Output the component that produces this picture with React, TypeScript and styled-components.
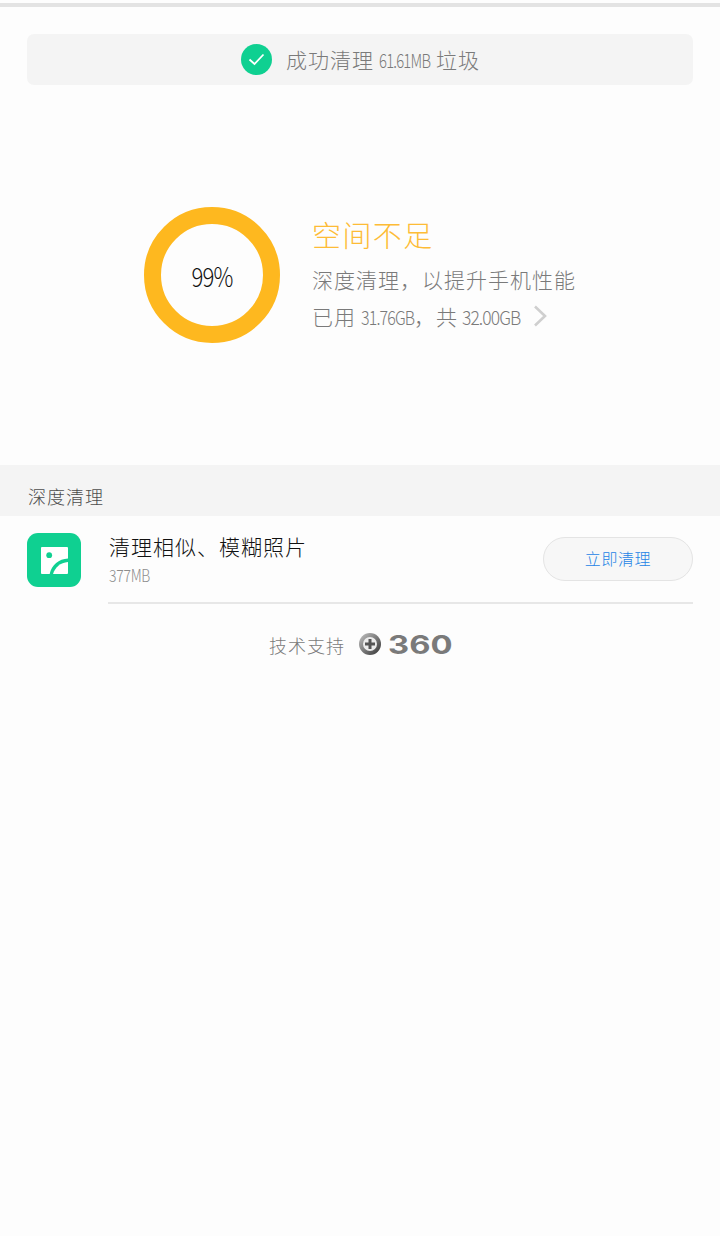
import React from "react";
import styled, { createGlobalStyle } from "styled-components";

const Global = createGlobalStyle`
  html, body { margin: 0; padding: 0; background: #fdfdfd; }
  body { font-family: "Noto Sans CJK SC", "Noto Sans", sans-serif; }
`;

const Page = styled.div`
  width: 720px;
  height: 1236px;
  background: #fdfdfd;
  display: flex;
  flex-direction: column;
  overflow: hidden;
`;

const TopLine = styled.div`
  margin-top: 3px;
  height: 4px;
  flex: none;
  background: #e3e3e3;
`;

const Banner = styled.div`
  margin: 27px 27px 0;
  height: 51px;
  flex: none;
  border-radius: 7px;
  background: #f4f4f4;
  display: flex;
  align-items: center;
  gap: 14px;
  padding-left: 214px;
  box-sizing: border-box;
`;

const CheckBadge = styled.span`
  width: 31px;
  height: 31px;
  border-radius: 50%;
  background: #0fd091;
  display: flex;
  align-items: center;
  justify-content: center;
`;

const BannerText = styled.span`
  display: flex;
  align-items: center;
  font-size: 21px;
  line-height: 1;
  letter-spacing: 1px;
  color: #7a7a7a;
  font-weight: 300;
  white-space: pre;
`;

const Narrow = styled.span<{ $w: number; $scale: number; $left: number; $right: number }>`
  display: inline-block;
  font-size: 19px;
  letter-spacing: -1px;
  width: ${(p) => p.$w}px;
  margin: 0 ${(p) => p.$right}px 0 ${(p) => p.$left}px;
  transform: scaleX(${(p) => p.$scale});
  transform-origin: left center;
  white-space: nowrap;
`;

const Hero = styled.section`
  height: 380px;
  flex: none;
  display: flex;
  align-items: center;
  padding-left: 144px;
  box-sizing: border-box;
  gap: 32px;
`;

const Ring = styled.div`
  width: 136px;
  height: 136px;
  box-sizing: border-box;
  border: 17px solid #feb81f;
  border-radius: 50%;
  display: flex;
  align-items: center;
  justify-content: center;
  flex: none;
`;

const RingLabel = styled.span`
  display: inline-block;
  font-size: 27px;
  color: #111;
  font-weight: 300;
  letter-spacing: -1px;
  transform: scaleX(0.82);
`;

const HeroText = styled.div`
  display: flex;
  flex-direction: column;
`;

const Title = styled.div`
  font-size: 29px;
  line-height: 36px;
  letter-spacing: 1.4px;
  color: #fdbc36;
  font-weight: 300;
  margin-bottom: 9px;
`;

const HeroLine = styled.div`
  display: flex;
  align-items: center;
  font-size: 21px;
  line-height: 37px;
  letter-spacing: 1px;
  color: #7a7a7a;
  font-weight: 300;
  height: 37px;
  white-space: pre;
`;

const Chevron = styled.svg`
  margin-left: 13px;
  flex: none;
`;

const SectionHead = styled.div`
  height: 51px;
  flex: none;
  background: #f4f4f4;
  display: flex;
  align-items: flex-end;
  padding: 0 0 8px 28px;
  box-sizing: border-box;
  font-size: 18px;
  line-height: 24px;
  letter-spacing: 1px;
  color: #4d4d4d;
  font-weight: 300;
`;

const Row = styled.div`
  height: 88px;
  flex: none;
  display: flex;
  align-items: flex-start;
  padding: 17px 27px 0;
  box-sizing: border-box;
`;

const AppIcon = styled.div`
  width: 54px;
  height: 54px;
  border-radius: 11px;
  background: #0fd091;
  display: flex;
  align-items: center;
  justify-content: center;
  flex: none;
`;

const RowBody = styled.div`
  margin-left: 27px;
  align-self: stretch;
  flex: 1;
  border-bottom: 2px solid #e7e7e7;
  display: flex;
  align-items: flex-start;
  justify-content: space-between;
  margin-top: -17px;
  padding-top: 15px;
`;

const RowText = styled.div`
  display: flex;
  flex-direction: column;
`;

const RowTitle = styled.div`
  font-size: 21px;
  line-height: 30px;
  letter-spacing: 1px;
  padding-left: 1px;
  color: #111;
  font-weight: 300;
`;

const RowSize = styled.div`
  margin-top: 2px;
  margin-left: 1px;
  font-size: 17px;
  font-weight: 300;
  line-height: 24px;
  letter-spacing: -0.3px;
  color: #8c8c8c;
  transform: scaleX(0.82);
  transform-origin: left center;
`;

const CleanButton = styled.button`
  width: 150px;
  height: 44px;
  margin-top: 6px;
  padding: 0 0 2px;
  border-radius: 22px;
  border: 1px solid #e4e4e4;
  background: #f7f7f7;
  color: #2484e6;
  font-family: inherit;
  font-size: 16px;
  font-weight: 300;
  letter-spacing: 0.6px;
`;

const Footer = styled.div`
  height: 80px;
  flex: none;
  display: flex;
  align-items: flex-start;
  padding: 27px 0 0 269px;
  box-sizing: border-box;
  gap: 14px;
  font-size: 18px;
  color: #7a7a7a;
  font-weight: 300;
  letter-spacing: 1px;
  line-height: 28px;
`;

const LogoWrap = styled.div`
  display: flex;
  align-items: center;
  gap: 7px;
  height: 28px;
  margin-top: -1px;
`;

const LogoText = styled.span`
  display: inline-block;
  font-family: "Inter", "Liberation Sans", sans-serif;
  font-weight: 700;
  font-size: 26px;
  line-height: 28px;
  padding-top: 1px;
  letter-spacing: 0;
  width: 64px;
  color: #7a7a7a;
  transform: scaleX(1.26);
  transform-origin: left center;
  white-space: nowrap;
`;

export default function App() {
  return (
    <Page>
      <Global />
      <TopLine />
      <Banner>
        <CheckBadge>
          <svg width="17" height="13" viewBox="0 0 17 13" fill="none">
            <path d="M1.500 6.500 L6.500 11 L15.500 1.500" stroke="#fff" strokeWidth="1.8" />
          </svg>
        </CheckBadge>
        <BannerText>
          成功清理
          <Narrow $w={51} $scale={0.78} $left={5} $right={6}>61.61MB</Narrow>
          垃圾
        </BannerText>
      </Banner>
      <Hero>
        <Ring>
          <RingLabel>99%</RingLabel>
        </Ring>
        <HeroText>
          <Title>空间不足</Title>
          <HeroLine>深度清理，以提升手机性能</HeroLine>
          <HeroLine>
            已用
            <Narrow $w={53} $scale={0.84} $left={5} $right={0}>31.76GB</Narrow>
            ，共
            <Narrow $w={58} $scale={0.92} $left={4} $right={0}>32.00GB</Narrow>
            <Chevron width="14" height="22" viewBox="0 0 14 22" fill="none">
              <path d="M2 1.500 L12 11 L2 20.500" stroke="#cfcfcf" strokeWidth="2.6" />
            </Chevron>
          </HeroLine>
        </HeroText>
      </Hero>
      <SectionHead>深度清理</SectionHead>
      <Row>
        <AppIcon>
          <svg width="27" height="27" viewBox="0 0 28 28">
            <path
              fill="#fff"
              d="M1 0H27a1 1 0 0 1 1 1V12C18.500 12.500 11 18.500 9 28H1a1 1 0 0 1-1-1V1a1 1 0 0 1 1-1Z"
            />
            <path fill="#fff" d="M28 15.500V27a1 1 0 0 1-1 1H12.500C14.500 21 20 16 28 15.500Z" />
            <circle cx="8.500" cy="8.500" r="3" fill="#0fd091" />
          </svg>
        </AppIcon>
        <RowBody>
          <RowText>
            <RowTitle>清理相似、模糊照片</RowTitle>
            <RowSize>377MB</RowSize>
          </RowText>
          <CleanButton>立即清理</CleanButton>
        </RowBody>
      </Row>
      <Footer>
        <span>技术支持</span>
        <LogoWrap>
          <svg width="22" height="22" viewBox="0 0 22 22">
            <defs>
              <linearGradient id="ball" x1="0" y1="0" x2="1" y2="1">
                <stop offset="0" stopColor="#c4c4c4" />
                <stop offset="1" stopColor="#333" />
              </linearGradient>
            </defs>
            <circle cx="11" cy="11" r="11" fill="url(#ball)" />
            <circle cx="11" cy="11" r="7" fill="#ececec" />
            <path d="M9.500 6h3v3.500H16v3h-3.500V16h-3v-3.500H6v-3h3.500Z" fill="#555" />
          </svg>
          <LogoText>360</LogoText>
        </LogoWrap>
      </Footer>
    </Page>
  );
}
